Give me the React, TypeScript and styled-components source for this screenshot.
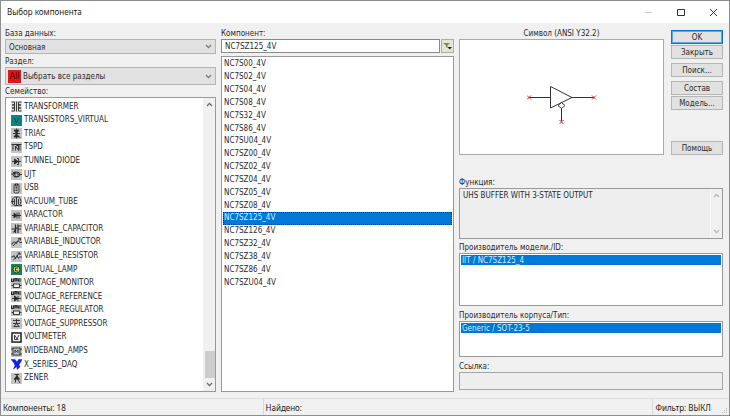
import React, { useState } from "react";
import styled, { createGlobalStyle, css } from "styled-components";

const uiFont = '"DejaVu Sans Condensed", "DejaVu Sans", sans-serif';
const shellFont = '"Noto Sans", "Open Sans", sans-serif';

const GlobalStyle = createGlobalStyle`
  *, *::before, *::after { box-sizing: border-box; }
  body { margin: 0; background: #f0f0f0; }
  button, input, select, textarea { font: inherit; color: inherit; margin: 0; border-radius: 0; }
`;

const Dialog = styled.div`
  min-height: 100vh;
  display: flex;
  flex-direction: column;
  border: 1px solid #8e8e8e;
  background: #f0f0f0;
  color: #2a2a2a;
  font: 8px/12px ${uiFont};
`;

const TitleBar = styled.header`
  display: flex;
  align-items: center;
  height: 22px;
  padding: 0 11px 0 6px;
  background: #fff;
`;

const Title = styled.h1`
  flex: 1;
  margin: 0;
  font: 400 8px/14px ${shellFont};
  color: #222;
`;

const WindowButtons = styled.div`
  display: flex;
  gap: 22px;
`;

const WindowButton = styled.button`
  display: flex;
  padding: 0;
  border: 0;
  background: none;
  color: #333;
  &:disabled { color: #ccc; }
`;

const Body = styled.main`
  flex: 1;
  display: grid;
  grid-template-columns: 211fr 233fr 264fr;
  column-gap: 5px;
  padding: 4px 6px 6px 4px;
`;

const Column = styled.section`
  display: flex;
  flex-direction: column;
  min-width: 0;
`;

const Label = styled.label<{ $space?: number }>`
  display: block;
  margin-top: ${(p) => p.$space ?? 0}px;
  height: 12px;
  line-height: 14px;
  white-space: nowrap;
`;

const SelectFrame = styled.div<{ $tall?: boolean }>`
  display: flex;
  align-items: center;
  height: ${(p) => (p.$tall ? 18 : 15)}px;
  padding: 0 3px 0 2px;
  border: 1px solid #b4b4b4;
  background: #e1e1e1;
  color: #777;
`;

const Select = styled.select`
  flex: 1;
  min-width: 0;
  height: 100%;
  padding: 2px 1px 0;
  border: 0;
  outline: 0;
  background: none;
  color: #2a2a2a;
  appearance: none;
`;

const AllBadge = styled.span`
  flex: none;
  width: 13px;
  height: 13px;
  margin-right: 1px;
  background: #e0161b;
  color: #400;
  font: 400 9px/13px ${uiFont};
  text-align: center;
`;

const ListFrame = styled.div`
  flex: 1;
  display: flex;
  border: 1px solid #999;
  background: #fff;
  min-height: 0;
`;

const FamilyList = styled.ul`
  flex: 1;
  display: grid;
  grid-auto-rows: minmax(12px, 1fr);
  margin: 0;
  padding: 2px 0 6px 5px;
  list-style: none;
`;

const FamilyRow = styled.li`
  display: flex;
  align-items: center;
  gap: 2px;
  svg { flex: none; }
`;

const ScrollBar = styled.div<{ $flat?: boolean }>`
  flex: none;
  display: flex;
  flex-direction: column;
  justify-content: space-between;
  align-items: center;
  width: 12px;
  padding: 4px 0;
  background: #f0f0f0;
  color: ${(p) => (p.$flat ? "#b5b5b5" : "#666")};
  border-left: 1px solid ${(p) => (p.$flat ? "#f8f8f8" : "#f0f0f0")};
`;

const Thumb = styled.div`
  width: 10px;
  height: 27px;
  margin-top: auto;
  margin-bottom: 4px;
  background: #cdcdcd;
`;

const SearchRow = styled.div`
  display: flex;
  gap: 1px;
  margin-bottom: 3px;
`;

const TextField = styled.input`
  flex: 1;
  min-width: 0;
  height: 14px;
  padding: 0 3px;
  border: 1px solid #8a8a8a;
  background: #fff;
  outline: 0;
  &:read-only { flex: none; height: 18px; border-color: #a5a5a5; background: #eee; }
`;

const FilterButton = styled.button`
  display: flex;
  align-items: center;
  justify-content: center;
  width: 13px;
  height: 14px;
  padding: 0;
  border: 1px solid #adadad;
  background: #e3e5d8;
`;

const ComponentList = styled.ul`
  flex: 1;
  display: grid;
  grid-auto-rows: minmax(12px, 1fr);
  margin: 0;
  padding: 1px 1px 102px;
  list-style: none;
`;

const selected = css`
  background: #0078d7;
  color: #d5ecff;
`;

const ComponentRow = styled.li<{ $selected: boolean }>`
  display: flex;
  align-items: center;
  padding-left: 1px;
  cursor: default;
  ${(p) => p.$selected && css`${selected} outline: 1px dotted #3a3020; outline-offset: -1px;`}
`;

const Preview = styled.div`
  display: grid;
  grid-template-columns: minmax(0, 1fr) 52px;
  column-gap: 7px;
`;

const SymbolPanel = styled.figure`
  display: flex;
  flex-direction: column;
  margin: 0;
`;

const Caption = styled.figcaption`
  height: 12px;
  line-height: 14px;
  text-align: center;
`;

const Canvas = styled.div`
  display: flex;
  justify-content: center;
  height: 116px;
  padding: 46px 0 0 0;
  border: 1px solid #aaa;
  background: #fff;
`;

const Actions = styled.div`
  display: flex;
  flex-direction: column;
  padding-top: 2px;
`;

const ActionButton = styled.button<{ $space?: number; $primary?: boolean }>`
  height: 14px;
  margin-top: ${(p) => p.$space ?? 1}px;
  padding: 1px 0 0;
  border: ${(p) => (p.$primary ? "1px solid #0078d7" : "1px solid #b5b5b5")};
  box-shadow: ${(p) => (p.$primary ? "inset 0 0 0 1px #5aa8e2" : "none")};
  background: #e1e1e1;
  line-height: 12px;
  white-space: nowrap;
`;

const FunctionBox = styled.div`
  display: flex;
  height: 51px;
  border: 1px solid #999;
`;

const FunctionText = styled.textarea`
  flex: 1;
  min-width: 0;
  padding: 1px 3px 0;
  border: 0;
  outline: 0;
  resize: none;
  overflow: hidden;
  background: #eee;
`;

const SmallList = styled.ul<{ $height: number }>`
  height: ${(p) => p.$height}px;
  margin: 0;
  padding: 1px;
  border: 1px solid #999;
  background: #fff;
  list-style: none;
`;

const SmallRow = styled.li`
  height: 10px;
  padding-left: 1px;
  line-height: 12px;
  ${selected}
`;

const StatusBar = styled.footer`
  display: flex;
  height: 17px;
  border-top: 1px solid #dcdcdc;
  font: 8px/17px ${shellFont};
  color: #222;
`;

const StatusCell = styled.div<{ $grow: number }>`
  flex: ${(p) => p.$grow} 1 0;
  padding-left: 2px;
  white-space: nowrap;
  & + & { border-left: 1px solid #d8d8d8; }
`;

const Grip = styled.svg`
  align-self: flex-end;
`;

const Chevron = ({ up = false }: { up?: boolean }) => (
  <svg width="7" height="5" viewBox="0 0 7 5" fill="none" stroke="currentColor" strokeWidth="1.2" aria-hidden="true">
    <path d={up ? "M1 4 3.5 1.3 6 4" : "M1 1 3.5 3.7 6 1"} />
  </svg>
);

const topMarks = <path d="M1 1v6h4V1M8 7V1h4v6M8 4h4M15 1v6M15 2h5M15 6h5" strokeWidth="2.4" />;

const glyphs: Record<string, React.ReactNode> = {
  transformer: (
    <>
      <path d="M1 2h6v6H2h5v6H2h5v6H1M11 1v20M21 2h-6v6h5h-5v6h5h-5v6h6" />
    </>
  ),
  virtual: (
    <path d="M7 6l4 10 4-10" stroke="#063f42" />
  ),
  triac: (
    <>
      <path d="M11 1v20M4 11h14M14 15l5 5" />
      <path d="M6 4h10l-5 7zM6 18h10l-5-7z" fill="currentColor" />
    </>
  ),
  tspd: (
    <>
      <path d="M1 5h20M4 5v12M9 17V8l6 9V7M18 5v12" />
      <path d="M9 5l6 4v-4z" fill="currentColor" />
    </>
  ),
  tunnel: (
    <>
      <path d="M2 11h18M15 5v12M12 5h3M12 17h3" />
      <path d="M7 6l7 5-7 5z" fill="currentColor" />
    </>
  ),
  ujt: (
    <>
      <path d="M0 10h7M15 11h7M8 5v12M8 8h6v7H8M3 5l5 5" />
      <ellipse cx="11" cy="11" rx="7" ry="5" />
    </>
  ),
  usb: (
    <>
      <rect x="6" y="2" width="10" height="18" rx="3" />
      <path d="M9 2v4h4V2M9 9h4M9 12h4M9 15h4" />
    </>
  ),
  tube: (
    <>
      <path d="M7 2h8q5 2 5 9t-5 8H7q-5-2-5-8t5-9zM0 11h7M11 2v18M7 6v11M15 6v11M17 19h5" />
    </>
  ),
  varactor: (
    <>
      <path d="M2 11h18M12 5v12M16 5v12" />
      <path d="M6 6l6 5-6 5z" fill="currentColor" />
    </>
  ),
  capacitor: (
    <>
      <path d="M1 12h8M9 3v17M14 3v17M14 6h7M14 12h6M5 19 12 9" strokeWidth="2.4" />
    </>
  ),
  inductor: (
    <>
      <path d="M0 14h3q0-5 4-4t4 3q0-5 4-4t3 2h4M4 18 18 3M14 3h5v4" />
    </>
  ),
  resistor: (
    <>
      <path d="M0 12h4l2-3 3 6 3-6 3 6 2-3h5M5 18 17 4M13 4h5v4" />
    </>
  ),
  lamp: (
    <>
      <circle cx="11" cy="11" r="7" fill="#dfd55c" stroke="#102c1e" />
      <path d="M14 8H9v6h5" stroke="#102c1e" />
    </>
  ),
  monitor: (
    <>
      {topMarks}
      <rect x="5" y="12" width="12" height="7" fill="#eee" />
      <path d="M1 15h4M17 15h4" />
    </>
  ),
  reference: (
    <>
      {topMarks}
      <path d="M2 15h18M14 10v11" />
      <path d="M7 10l7 5-7 5z" fill="currentColor" />
    </>
  ),
  suppressor: (
    <>
      <path d="M11 2v4M4 5h14M11 5v6M6 17l5-6 5 6M4 11h14M5 17h12" />
    </>
  ),
  voltmeter: (
    <>
      <rect x="2" y="2" width="18" height="18" fill="#f4f4f4" strokeWidth="3" />
      <path d="M7 6v9h8M8 7l4 7 4-8" />
    </>
  ),
  wideband: (
    <>
      <rect x="4" y="4" width="14" height="14" />
      <path d="M0 6h4M0 16h4M18 6h4M18 16h4M8 14V8l3 3 3-3v6" />
    </>
  ),
  daq: (
    <>
      <path d="M0 1h8l4 5 3-5h7l-3 6-3 4 2 5-6 5v-6l-7 5 3-7-2-5z" fill="#0d1fe8" stroke="#0d1fe8" strokeWidth="1" />
    </>
  ),
  zener: (
    <>
      <path d="M7 3h9M12 3v5M6 12h12M9 12v7M14 13l4 7" />
      <path d="M7 12l5-7 4 7z" fill="currentColor" />
    </>
  ),
};

const backgrounds: Record<string, string> = { virtual: "#0b8583", lamp: "#16846c", daq: "#fff", transformer: "#dedede" };

const FamilyIcon = ({ kind }: { kind: string }) => (
  <svg width="11" height="11" viewBox="0 0 22 22" fill="none" stroke="currentColor" strokeWidth="1.8" aria-hidden="true">
    <rect width="22" height="22" fill={backgrounds[kind] ?? "#c3c3c3"} stroke="none" />
    {glyphs[kind]}
  </svg>
);

const families: [string, string][] = [
  ["TRANSFORMER", "transformer"],
  ["TRANSISTORS_VIRTUAL", "virtual"],
  ["TRIAC", "triac"],
  ["TSPD", "tspd"],
  ["TUNNEL_DIODE", "tunnel"],
  ["UJT", "ujt"],
  ["USB", "usb"],
  ["VACUUM_TUBE", "tube"],
  ["VARACTOR", "varactor"],
  ["VARIABLE_CAPACITOR", "capacitor"],
  ["VARIABLE_INDUCTOR", "inductor"],
  ["VARIABLE_RESISTOR", "resistor"],
  ["VIRTUAL_LAMP", "lamp"],
  ["VOLTAGE_MONITOR", "monitor"],
  ["VOLTAGE_REFERENCE", "reference"],
  ["VOLTAGE_REGULATOR", "monitor"],
  ["VOLTAGE_SUPPRESSOR", "suppressor"],
  ["VOLTMETER", "voltmeter"],
  ["WIDEBAND_AMPS", "wideband"],
  ["X_SERIES_DAQ", "daq"],
  ["ZENER", "zener"],
];

const components = [
  "NC7S00_4V", "NC7S02_4V", "NC7S04_4V", "NC7S08_4V", "NC7S32_4V", "NC7S86_4V",
  "NC7SU04_4V", "NC7SZ00_4V", "NC7SZ02_4V", "NC7SZ04_4V", "NC7SZ05_4V", "NC7SZ08_4V",
  "NC7SZ125_4V", "NC7SZ126_4V", "NC7SZ32_4V", "NC7SZ38_4V", "NC7SZ86_4V", "NC7SZU04_4V",
];

const BufferSymbol = () => (
  <svg width="70" height="40" viewBox="0 0 70 40" fill="none" stroke="#333" strokeWidth="1" role="img" aria-label="NC7SZ125_4V">
    <path d="M2 11.5h22M45 11.5h22M23.500 .5v21.500L45 11.500zM34.500 22v13" />
    <path d="M31 19.500l3.500-3 3.500 3-3.500 3z" />
    <path d="M0 9.500l4 4M4 9.500l-4 4M65 9.500l4 4M69 9.500l-4 4M32.500 34l4 4M36.500 34l-4 4" stroke="#c8373c" />
  </svg>
);

export default function App() {
  const [current, setCurrent] = useState("NC7SZ125_4V");

  return (
    <>
      <GlobalStyle />
      <Dialog>
        <TitleBar>
          <Title>Выбор компонента</Title>
          <WindowButtons>
            <WindowButton disabled aria-label="Свернуть">
              <svg width="10" height="10" viewBox="0 0 10 10" stroke="currentColor"><path d="M1 5.500h7" /></svg>
            </WindowButton>
            <WindowButton aria-label="Развернуть">
              <svg width="10" height="10" viewBox="0 0 10 10" stroke="currentColor" fill="none"><path d="M1.500 2.500h7v6h-7z" /></svg>
            </WindowButton>
            <WindowButton aria-label="Закрыть окно">
              <svg width="10" height="10" viewBox="0 0 10 10" stroke="currentColor" fill="none"><path d="M2 2l7 7M9 2l-7 7" /></svg>
            </WindowButton>
          </WindowButtons>
        </TitleBar>

        <Body>
          <Column>
            <Label htmlFor="database">База данных:</Label>
            <SelectFrame>
              <Select id="database"><option>Основная</option></Select>
              <Chevron />
            </SelectFrame>
            <Label htmlFor="group" $space={1}>Раздел:</Label>
            <SelectFrame $tall>
              <AllBadge aria-hidden="true">All</AllBadge>
              <Select id="group"><option>Выбрать все разделы</option></Select>
              <Chevron />
            </SelectFrame>
            <Label as="span" id="family-label">Семейство:</Label>
            <ListFrame>
              <FamilyList role="listbox" aria-labelledby="family-label">
                {families.map(([name, kind]) => (
                  <FamilyRow key={name} role="option">
                    <FamilyIcon kind={kind} />
                    {name}
                  </FamilyRow>
                ))}
              </FamilyList>
              <ScrollBar>
                <Chevron up />
                <Thumb />
                <Chevron />
              </ScrollBar>
            </ListFrame>
          </Column>

          <Column>
            <Label htmlFor="component">Компонент:</Label>
            <SearchRow>
              <TextField id="component" value={current} onChange={(e) => setCurrent(e.target.value)} />
              <FilterButton aria-label="Фильтр">
                <svg width="9" height="8" viewBox="0 0 9 8" aria-hidden="true">
                  <path d="M0 1h7L4.500 3.500V6L3 5V3.500z" fill="#7d8f45" />
                  <path d="M4.500 5h4.500L6.750 7.500z" fill="#222" />
                </svg>
              </FilterButton>
            </SearchRow>
            <ListFrame>
              <ComponentList role="listbox" aria-label="Компоненты">
                {components.map((name) => (
                  <ComponentRow
                    key={name}
                    role="option"
                    aria-selected={name === current}
                    $selected={name === current}
                    onClick={() => setCurrent(name)}
                  >
                    {name}
                  </ComponentRow>
                ))}
              </ComponentList>
            </ListFrame>
          </Column>

          <Column>
            <Preview>
              <SymbolPanel>
                <Caption>Символ (ANSI Y32.2)</Caption>
                <Canvas><BufferSymbol /></Canvas>
              </SymbolPanel>
              <Actions>
                <ActionButton $primary>OK</ActionButton>
                <ActionButton>Закрыть</ActionButton>
                <ActionButton $space={4}>Поиск...</ActionButton>
                <ActionButton $space={4}>Состав</ActionButton>
                <ActionButton>Модель...</ActionButton>
                <ActionButton $space={31}>Помощь</ActionButton>
              </Actions>
            </Preview>
            <Label htmlFor="function" $space={21}>Функция:</Label>
            <FunctionBox>
              <FunctionText id="function" readOnly value="UHS BUFFER WITH 3-STATE OUTPUT" />
              <ScrollBar $flat>
                <Chevron up />
                <Chevron />
              </ScrollBar>
            </FunctionBox>
            <Label as="span" id="model-label" $space={2}>Производитель модели./ID:</Label>
            <SmallList role="listbox" aria-labelledby="model-label" $height={53}>
              <SmallRow role="option" aria-selected>IIT / NC7SZ125_4</SmallRow>
            </SmallList>
            <Label as="span" id="package-label" $space={3}>Производитель корпуса/Тип:</Label>
            <SmallList role="listbox" aria-labelledby="package-label" $height={36}>
              <SmallRow role="option" aria-selected>Generic / SOT-23-5</SmallRow>
            </SmallList>
            <Label htmlFor="link" $space={3}>Ссылка:</Label>
            <TextField id="link" readOnly value="" />
          </Column>
        </Body>

        <StatusBar>
          <StatusCell $grow={261}>Компоненты: 18</StatusCell>
          <StatusCell $grow={389}>Найдено:</StatusCell>
          <StatusCell $grow={66}>Фильтр: ВЫКЛ</StatusCell>
          <Grip width="8" height="8" viewBox="0 0 8 8" fill="#bbb" aria-hidden="true">
            <path d="M5 1h1v1H5zM3 3h1v1H3zM5 3h1v1H5zM1 5h1v1H1zM3 5h1v1H3zM5 5h1v1H5z" />
          </Grip>
        </StatusBar>
      </Dialog>
    </>
  );
}
